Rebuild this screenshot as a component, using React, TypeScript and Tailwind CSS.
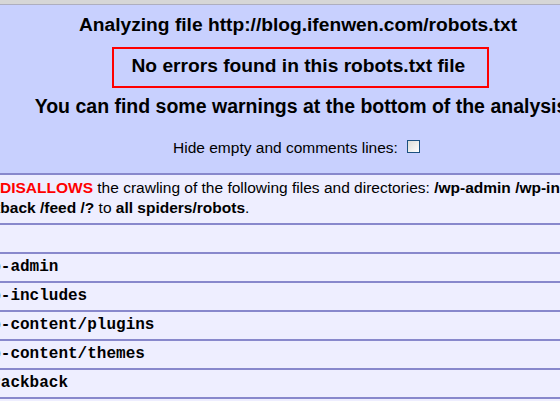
import React from "react";

const rows = ["", "/wp-admin", "/wp-includes", "/wp-content/plugins", "/wp-content/themes", "/trackback", "/feed", "/?"];

export default function App() {
  return (
    <div
      className="w-[560px] h-[401px] overflow-hidden bg-[#eeeeff] text-black"
      style={{ fontFamily: '"Liberation Sans", Arial, sans-serif' }}
    >
      <div className="w-[600px]">
        <div className="h-[4px] bg-[#d6d6d6] border-b border-[#aeaebe] box-content" />
        <div className="bg-[#c8d0fe] border-b-2 border-[#8888cc] flex flex-col items-center pt-[9px] pb-[16px]">
          <div className="text-[19.2px] leading-[22px] font-bold whitespace-nowrap pr-[4px]">
            Analyzing file http://blog.ifenwen.com/robots.txt
          </div>
          <div className="mt-[11px] w-[377px] h-[41px] border-2 border-[#ff0000] pt-[6px] pl-[18px] text-left text-[19.2px] leading-[22px] font-bold whitespace-nowrap">
            No errors found in this robots.txt file
          </div>
          <div className="mt-[7px] text-[19.5px] leading-[22px] font-bold whitespace-nowrap pl-[2px]">
            You can find some warnings at the bottom of the analysis
          </div>
          <div className="mt-[22px] flex items-start pr-[7px] text-[15.5px] leading-[18px] whitespace-nowrap">
            <span>Hide empty and comments lines:</span>
            <span className="ml-[9px] mt-[1px] w-[13px] h-[13px] border border-[#1c5180] bg-gradient-to-br from-[#dcdcd7] to-[#ffffff] box-border" />
          </div>
        </div>
        <div className="h-[48px] pt-[3px] text-[15.5px] leading-[20px] whitespace-nowrap overflow-hidden">
          <div>
            <span className="font-bold text-[#ff0000]">DISALLOWS</span> the crawling of the following files and directories:{" "}
            <b>/wp-admin /wp-includes /wp-content/plugins /wp-content/themes</b>
          </div>
          <div className="ml-[-41px]">
            <b>/trackback /feed /?</b> to <b>all spiders/robots</b>.
          </div>
        </div>
        {rows.map((r, i) => (
          <div
            key={i}
            className="border-t-2 border-[#8888cc] h-[29px] leading-[27px] font-bold text-[16px] whitespace-nowrap"
            style={{ fontFamily: '"Liberation Mono", "Courier New", monospace' }}
          >
            <span className="ml-[-28px]">{r}</span>
          </div>
        ))}
      </div>
    </div>
  );
}
